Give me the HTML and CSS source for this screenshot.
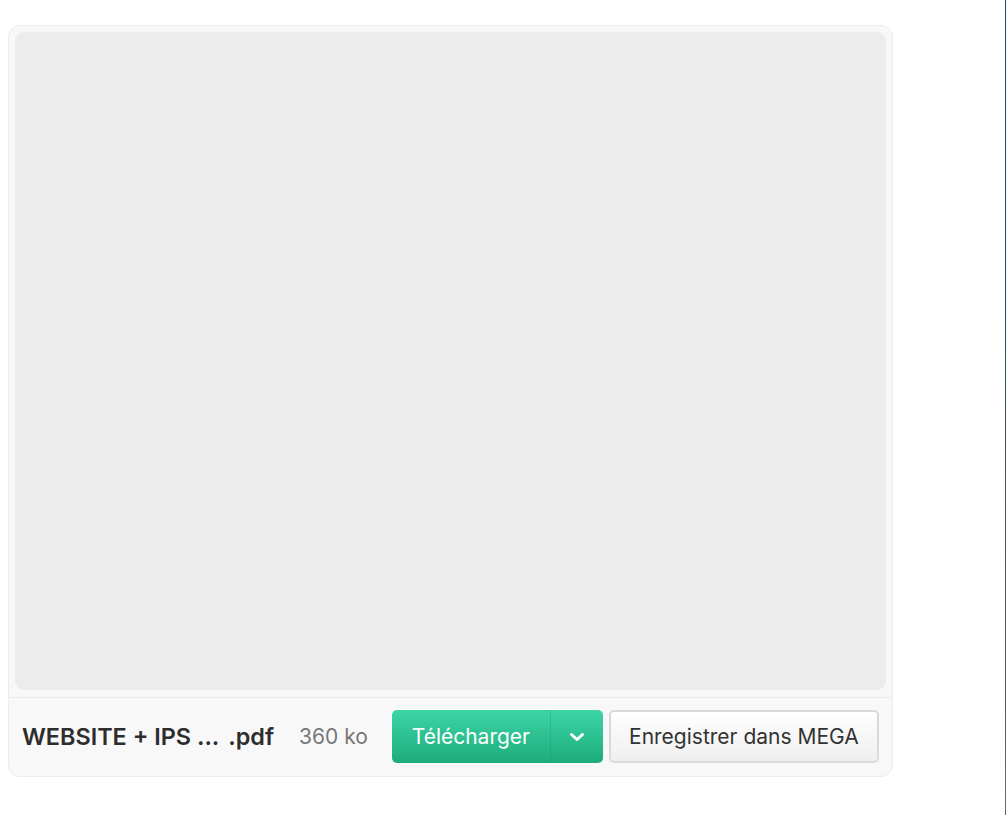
FILE: index.html
```html
<!DOCTYPE html>
<html lang="fr">
<head>
<meta charset="utf-8">
<title>MEGA</title>
<link rel="stylesheet" href="styles.css">
</head>
<body>
<div class="card">
  <div class="preview"></div>
  <div class="footer">
    <div class="name"><span class="base">WEBSITE + IPS ...</span><span class="ext">.pdf</span></div>
    <div class="size">360 ko</div>
    <div class="dl">
      <button class="dl-main">Télécharger</button>
      <button class="dl-more" aria-label="Plus">
        <svg width="18" height="18" viewBox="0 0 18 18"><path d="M3.5 6.5 L9 11.5 L14.5 6.5" fill="none" stroke="#fff" stroke-width="3" stroke-linecap="round" stroke-linejoin="round"/></svg>
      </button>
    </div>
    <button class="save">Enregistrer dans MEGA</button>
  </div>
</div>
<div class="edge"></div>
</body>
</html>
```
FILE: styles.css
```css
html, body {
  margin: 0;
  padding: 0;
  background: #fff;
}
body {
  padding: 25px 0 0 8px;
  font-family: Inter, "Noto Sans", sans-serif;
}
.card {
  width: 883px;
  height: 750px;
  border: 1px solid #ececec;
  border-radius: 12px;
  background: #f8f8f8;
  display: flex;
  flex-direction: column;
}
.preview {
  margin: 6px 6px 0 6px;
  height: 658px;
  background: #ececec;
  border-radius: 9px;
}
.footer {
  margin-top: 7px;
  border-top: 1px solid #e9e9e9;
  flex: 1;
  display: flex;
  align-items: center;
  padding: 0 0 1px 13px;
}
.name {
  font-size: 23.4px;
  font-weight: 600;
  color: #2d2d2d;
  display: flex;
  gap: 9px;
}
.size {
  margin-left: 25px;
  font-size: 21px;
  color: #777;
}
.dl {
  margin-left: 24px;
  display: flex;
  height: 53px;
  border-radius: 5px;
  overflow: hidden;
  background: linear-gradient(#3dd5a7, #1dac7b);
}
.dl button {
  border: 0;
  background: transparent;
  color: #fff;
  font-family: inherit;
  font-size: 21px;
  padding: 0;
  cursor: pointer;
}
.dl-main {
  width: 159px;
  border-right: 1px solid rgba(0, 100, 60, 0.15) !important;
}
.dl-more {
  width: 52px;
  display: flex;
  align-items: center;
  justify-content: center;
}
.save {
  margin-left: 6px;
  height: 53px;
  width: 270px;
  border: 2px solid #d9d9d9;
  border-radius: 5px;
  background: linear-gradient(#ffffff, #efefef);
  color: #333;
  font-family: inherit;
  font-size: 21px;
  padding: 0;
}
.edge {
  position: fixed;
  top: 0;
  right: 0;
  width: 1px;
  height: 100%;
  background: linear-gradient(#1c4d6b 0%, #2a4d60 40%, #555 70%, #666 100%);
}
```
